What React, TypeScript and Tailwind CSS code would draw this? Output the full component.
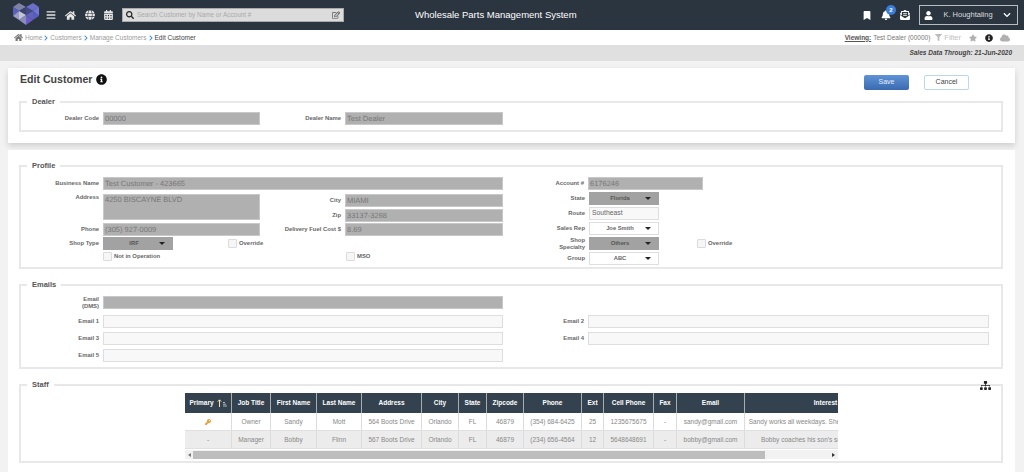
import {
  FaBars,
  FaBell,
  FaBookmark,
  FaCalendarAlt,
  FaChevronDown,
  FaChevronRight,
  FaCloud,
  FaEnvelopeOpenText,
  FaFilter,
  FaGlobe,
  FaHome,
  FaInfoCircle,
  FaKey,
  FaRegEdit,
  FaSearch,
  FaSitemap,
  FaStar,
  FaUser,
} from "react-icons/fa";

const Logo = () => (
  <svg width="26" height="22" viewBox="0 0 26 22" className="shrink-0 -mt-[2px]">
    <polygon points="0,4 6,0 13,4 6,8" fill="#7f82a8" />
    <polygon points="13,4 20,0 26,4 20,8" fill="#6a6ec8" />
    <polygon points="0,4 6,8 0,13" fill="#5b5fc0" />
    <polygon points="6,8 13,4 13,12" fill="#3c4170" />
    <polygon points="13,4 20,8 13,12" fill="#444a86" />
    <polygon points="20,8 26,4 26,13" fill="#7377d8" />
    <polygon points="0,13 6,8 6,17" fill="#9a9cc8" />
    <polygon points="6,8 13,12 6,17" fill="#c3c4d8" />
    <polygon points="13,12 20,8 20,17" fill="#6064b8" />
    <polygon points="20,8 26,13 20,17" fill="#595dc0" />
    <polygon points="6,17 13,12 13,22" fill="#8a8cc0" />
    <polygon points="13,12 20,17 13,22" fill="#6a5cc0" />
  </svg>
);

const Header = () => (
  <div className="h-[30px] bg-[#2b3540] flex items-center text-white">
    <div className="ml-[13px] mr-[7px] flex">
      <Logo />
    </div>
    <div className="flex items-center gap-[9px] text-[#e8e8e8]">
      <FaBars className="text-[10px] w-[10px]" />
      <FaHome className="text-[11px] w-[11px]" />
      <FaGlobe className="text-[10px] w-[10px]" />
      <FaCalendarAlt className="text-[10px] w-[9px]" />
    </div>
    <div className="ml-[9px] w-[222px] h-[14px] bg-[#dcdcdc] border border-[#aaa] flex items-center px-[3px]">
      <FaSearch className="text-[8px] text-[#222]" />
      <span className="ml-[3px] text-[6.4px] text-[#aaa] flex-1">
        Search Customer by Name or Account #
      </span>
      <FaRegEdit className="text-[8px] text-[#555]" />
    </div>
    <div className="ml-[71px] text-[9.5px] whitespace-nowrap">
      Wholesale Parts Management System
    </div>
    <div className="ml-auto flex items-center gap-[9px]">
      <FaBookmark className="text-[9px] w-[8px]" />
      <div className="relative ml-[1px]">
        <FaBell className="text-[10px]" />
        <span className="absolute -top-[5px] -right-[5px] w-[10px] h-[10px] rounded-full bg-[#3b7dd8] text-[6px] leading-[10px] text-center font-bold">
          2
        </span>
      </div>
      <FaEnvelopeOpenText className="text-[10px]" />
    </div>
    <div className="ml-[9px] mr-[6px] w-[99px] h-[20px] border border-[#b8bcc0] flex items-center pl-[4px] pr-[6px]">
      <FaUser className="text-[9px]" />
      <span className="flex-1 text-center text-[7.5px] text-[#ddd]">K. Houghtaling</span>
      <FaChevronDown className="text-[8px]" />
    </div>
  </div>
);

const Crumb = ({ text }: { text: string }) => (
  <>
    <span className="text-[#9a9a9a]">{text}</span>
    <FaChevronRight className="text-[6px] w-[4px] text-[#3d8fd8] mx-[2px]" />
  </>
);

const Breadcrumb = () => (
  <div className="h-[15px] bg-white flex items-center pl-[14px] pr-[14px] text-[6.5px]">
    <FaHome className="text-[9px] text-[#777] mr-[2px]" />
    <Crumb text="Home" />
    <Crumb text="Customers" />
    <Crumb text="Manage Customers" />
    <span className="text-[#444]">Edit Customer</span>
    <div className="ml-auto flex items-center text-[#777]">
      <span className="underline font-bold text-[#555]">Viewing:</span>
      <span className="ml-[2px]">Test Dealer (00000)</span>
      <FaFilter className="text-[7px] text-[#bbb] ml-[5px]" />
      <span className="text-[#c0c0c0] ml-[2px] text-[7.5px]">Filter</span>
      <FaStar className="text-[8px] text-[#b0b0b0] ml-[8px]" />
      <FaInfoCircle className="text-[8px] text-[#222] ml-[8px]" />
      <FaCloud className="text-[10px] text-[#b0b0b0] ml-[7px]" />
    </div>
  </div>
);

const Label = ({ children, w = "w-[82px]" }: { children: React.ReactNode; w?: string }) => (
  <div className={`${w} shrink-0 text-right text-[5.9px] leading-[6.5px] font-bold text-[#666] pr-[4px]`}>
    {children}
  </div>
);

const Input = ({ value, w, h = "h-[13px]", top }: { value?: string; w: string; h?: string; top?: boolean }) => (
  <div
    className={`${w} ${h} shrink-0 bg-[#b0b0b0] border border-[#c8c8c8] text-[7.5px] [text-rendering:geometricPrecision] text-[#777] px-[1px] flex ${top ? "items-start leading-[9px]" : "items-center"}`}
  >
    {value}
  </div>
);

const TextBox = ({ value, w }: { value?: string; w: string }) => (
  <div className={`${w} h-[13px] shrink-0 bg-[#f8f8f8] border border-[#dedede] text-[6.8px] text-[#666] px-[2px] flex items-center`}>
    {value}
  </div>
);

const Select = ({ value, off }: { value: string; off?: boolean }) => (
  <div
    className={`w-[70px] h-[13px] shrink-0 flex items-center pr-[7px] text-[5.8px] font-bold border ${off ? "bg-[#a2a2a2] border-[#a2a2a2] text-[#555]" : "bg-white border-[#dedede] text-[#666]"}`}
  >
    <span className="flex-1 text-center pl-[5px]">{value}</span>
    <span className="w-0 h-0 border-x-[3px] border-x-transparent border-t-[3px] border-t-[#222]" />
  </div>
);

const Check = ({ label }: { label: string }) => (
  <div className="flex items-center">
    <div className="w-[9px] h-[9px] bg-[#f6f6f6] border border-[#dcdcdc] rounded-[1px]" />
    <span className="ml-[2px] text-[5.9px] font-bold text-[#666]">{label}</span>
  </div>
);

const Section = ({ title, className, children }: { title: string; className: string; children: React.ReactNode }) => (
  <fieldset className={`relative border-2 border-[#e8e8e8] ml-[11px] mr-[12px] ${className}`}>
    <legend className="ml-[6px] px-[5px] text-[7.5px] font-bold text-[#555] leading-[9px]">{title}</legend>
    {children}
  </fieldset>
);

const ProfileLeft = () => (
  <div className="w-[489px] shrink-0 flex flex-col">
    <div className="flex items-center h-[13px]">
      <Label>Business Name</Label>
      <Input value="Test Customer - 423665" w="w-[400px]" />
    </div>
    <div className="flex mt-[4px] h-[42px]">
      <div className="w-[239px] shrink-0">
        <div className="flex">
          <Label>Address</Label>
          <Input value="4250 BISCAYNE BLVD" w="w-[157px]" h="h-[26px]" top />
        </div>
        <div className="flex items-center mt-[3px]">
          <Label>Phone</Label>
          <Input value="(305) 927-0009" w="w-[157px]" />
        </div>
      </div>
      <div className="flex flex-col gap-[2px]">
        <div className="flex items-center">
          <Label w="w-[85px]">City</Label>
          <Input value="MIAMI" w="w-[158px]" />
        </div>
        <div className="flex items-center">
          <Label w="w-[85px]">Zip</Label>
          <Input value="33137-3268" w="w-[158px]" />
        </div>
        <div className="flex items-center -mt-[1px]">
          <Label w="w-[85px]">Delivery Fuel Cost $</Label>
          <Input value="8.69" w="w-[158px]" />
        </div>
      </div>
    </div>
    <div className="flex items-center h-[13px] mt-[1px]">
      <Label>Shop Type</Label>
      <Select value="IRF" off />
      <div className="ml-[55px]">
        <Check label="Override" />
      </div>
    </div>
    <div className="flex items-center h-[12px] pl-[82px]">
      <div className="w-[243px]">
        <Check label="Not in Operation" />
      </div>
      <Check label="MSO" />
    </div>
  </div>
);

const ProfileRight = () => (
  <div className="flex flex-col gap-[2px]">
    <div className="flex items-center h-[13px]">
      <Label w="w-[78px]">Account #</Label>
      <Input value="6176246" w="w-[115px]" />
    </div>
    <div className="flex items-center h-[13px]">
      <Label w="w-[79px]">State</Label>
      <Select value="Florida" off />
    </div>
    <div className="flex items-center h-[13px]">
      <Label w="w-[79px]">Route</Label>
      <TextBox value="Southeast" w="w-[70px]" />
    </div>
    <div className="flex items-center h-[13px]">
      <Label w="w-[79px]">Sales Rep</Label>
      <Select value="Joe Smith" />
    </div>
    <div className="flex items-center h-[13px]">
      <Label w="w-[79px]">
        Shop
        <br />
        Specialty
      </Label>
      <Select value="Others" off />
      <div className="ml-[38px]">
        <Check label="Override" />
      </div>
    </div>
    <div className="flex items-center h-[13px]">
      <Label w="w-[79px]">Group</Label>
      <Select value="ABC" />
    </div>
  </div>
);

const columns = [
  { name: "Primary", w: "w-[47px]" },
  { name: "Job Title", w: "w-[39px]" },
  { name: "First Name", w: "w-[46px]" },
  { name: "Last Name", w: "w-[45px]" },
  { name: "Address", w: "w-[60px]" },
  { name: "City", w: "w-[37px]" },
  { name: "State", w: "w-[28px]" },
  { name: "Zipcode", w: "w-[37px]" },
  { name: "Phone", w: "w-[58px]" },
  { name: "Ext", w: "w-[22px]" },
  { name: "Cell Phone", w: "w-[50px]" },
  { name: "Fax", w: "w-[23px]" },
  { name: "Email", w: "w-[68px]" },
  { name: "Interest", w: "w-[162px]" },
];

const rows = [
  ["", "Owner", "Sandy", "Mott", "564 Boots Drive", "Orlando", "FL", "46879", "(354) 684-6425", "25", "1235675675", "-", "sandy@gmail.com", "Sandy works all weekdays. She is on call most nights"],
  ["-", "Manager", "Bobby", "Flinn", "567 Boots Drive", "Orlando", "FL", "46879", "(234) 656-4564", "12", "5648648691", "-", "bobby@gmail.com", "Bobby coaches his son's soccer team on Sat"],
];

const SortIcon = () => (
  <svg width="10" height="8" viewBox="0 0 10 8" className="ml-[3px]">
    <path d="M2.5 8V1M0.8 2.6L2.5 0.8L4.2 2.6" stroke="#f3e3b0" strokeWidth="1" fill="none" />
    <path d="M6 3.5h2M6 5.2h3M6 7h4" stroke="#cfd3d6" strokeWidth="0.8" />
  </svg>
);

const StaffTable = () => (
  <div className="w-[653px] overflow-hidden ml-[164px]">
    <div className="w-[840px]">
      <div className="flex h-[20px] bg-[#34424f]">
        {columns.map((c) => (
          <div
            key={c.name}
            className={`${c.w} shrink-0 border-r border-[#a8adb2] flex items-center justify-center text-[6.5px] font-bold text-white`}
          >
            {c.name}
            {c.name === "Primary" && <SortIcon />}
          </div>
        ))}
      </div>
      {rows.map((r, i) => (
        <div key={i} className={`flex h-[18px] border-b border-[#e0e0e0] ${i === 1 ? "bg-[#ececec]" : "bg-white"}`}>
          {r.map((cell, j) => (
            <div
              key={j}
              className={`${columns[j].w} shrink-0 border-r border-[#dcdcdc] flex items-center justify-center text-[6.5px] text-[#888] whitespace-nowrap overflow-hidden`}
            >
              {j === 0 && i === 0 ? <FaKey className="text-[6px] text-[#e8a33d]" /> : cell}
            </div>
          ))}
        </div>
      ))}
    </div>
    <div className="h-[9px] mt-[1px] bg-[#f1f1f1] flex items-center">
      <span className="w-0 h-0 ml-[3px] border-y-[2px] border-y-transparent border-r-[3px] border-r-[#777]" />
      <div className="ml-[2px] w-[572px] h-[8px] bg-[#bdbdbd]" />
      <span className="w-0 h-0 ml-auto mr-[3px] border-y-[2px] border-y-transparent border-l-[3px] border-l-[#333]" />
    </div>
  </div>
);

export default function App() {
  return (
    <div className="w-[1024px] h-[472px] overflow-hidden bg-[#f2f2f2] font-['Liberation_Sans',Arial,sans-serif]">
      <Header />
      <Breadcrumb />
      <div className="h-[16px] bg-[#e0e0e0] flex items-center justify-end pr-[12px] text-[6.5px] font-bold italic text-[#444]">
        Sales Data Through: 21-Jun-2020
      </div>
      <div className="ml-[8px] mr-[9px] mt-[7px] h-[75px] bg-white shadow-[0_3px_6px_rgba(0,0,0,0.15)] pt-[5px]">
        <div className="flex items-center h-[13px] pl-[12px]">
          <span className="text-[10.6px] font-bold text-[#444]">Edit Customer</span>
          <FaInfoCircle className="text-[11px] text-[#111] ml-[4px]" />
          <button className="ml-auto w-[45px] h-[15px] mt-[6px] rounded-[2px] bg-gradient-to-b from-[#5f93d6] to-[#3a6ab0] text-[7px] text-[#e6eefa]">
            Save
          </button>
          <button className="ml-[15px] mr-[46px] w-[45px] h-[15px] mt-[6px] rounded-[2px] bg-white border border-[#bcd6ef] text-[7px] text-[#444]">
            Cancel
          </button>
        </div>
        <Section title="Dealer" className="mt-[11px] h-[35px]">
          <div className="flex items-center mt-[6px]">
            <Label>Dealer Code</Label>
            <Input value="00000" w="w-[157px]" />
            <Label w="w-[85px]">Dealer Name</Label>
            <Input value="Test Dealer" w="w-[158px]" />
          </div>
        </Section>
      </div>
      <div className="ml-[8px] mr-[9px] mt-[7px] h-[330px] bg-white pt-[11px]">
        <Section title="Profile" className="h-[108px]">
          <div className="flex mt-[7px]">
            <ProfileLeft />
            <ProfileRight />
          </div>
        </Section>
        <Section title="Emails" className="mt-[11px] h-[89px]">
          <div className="flex flex-col gap-[4px] mt-[7px]">
            <div className="flex items-center mb-[2px]">
              <Label>
                Email
                <br />
                (DMS)
              </Label>
              <Input w="w-[400px]" />
            </div>
            <div className="flex items-center">
              <Label>Email 1</Label>
              <TextBox w="w-[400px]" />
              <Label w="w-[85px]">Email 2</Label>
              <TextBox w="w-[401px]" />
            </div>
            <div className="flex items-center">
              <Label>Email 3</Label>
              <TextBox w="w-[400px]" />
              <Label w="w-[85px]">Email 4</Label>
              <TextBox w="w-[401px]" />
            </div>
            <div className="flex items-center">
              <Label>Email 5</Label>
              <TextBox w="w-[400px]" />
            </div>
          </div>
        </Section>
        <Section title="Staff" className="mt-[11px] h-[83px]">
          <FaSitemap className="absolute right-[10px] -top-[9px] text-[11px] text-[#222]" />
          <div className="mt-[4px]">
            <StaffTable />
          </div>
        </Section>
      </div>
    </div>
  );
}
